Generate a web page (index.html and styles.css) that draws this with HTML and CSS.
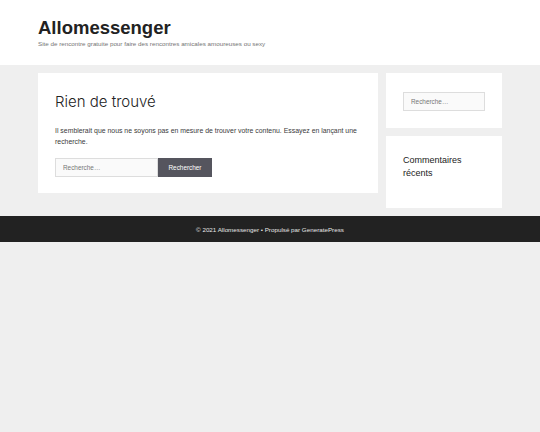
FILE: index.html
```html
<!DOCTYPE html>
<html lang="fr">
<head>
  <meta charset="UTF-8">
  <meta name="viewport" content="width=device-width, initial-scale=1.0">
  <title>Rien de trouvé – Allomessenger</title>
  <link rel="stylesheet" href="styles.css">
</head>
<body>
  <header class="site-header">
    <div class="inside-header">
      <p class="main-title">Allomessenger</p>
      <p class="site-description">Site de rencontre gratuite pour faire des rencontres amicales amoureuses ou sexy</p>
    </div>
  </header>

  <div class="site-content">
    <main class="content-area">
      <div class="inside-article">
        <h1 class="page-title">Rien de trouvé</h1>
        <p class="entry-text">Il semblerait que nous ne soyons pas en mesure de trouver votre contenu. Essayez en lançant une recherche.</p>
        <form class="search-form">
          <input type="search" class="search-field" placeholder="Recherche…">
          <button type="submit" class="search-submit">Rechercher</button>
        </form>
      </div>
    </main>

    <aside class="sidebar">
      <div class="widget widget-search">
        <input type="search" class="search-field" placeholder="Recherche…">
      </div>
      <div class="widget widget-comments">
        <h2 class="widget-title">Commentaires récents</h2>
      </div>
    </aside>
  </div>

  <footer class="site-info">
    <span>© 2021 Allomessenger • Propulsé par GeneratePress</span>
  </footer>
</body>
</html>
```

FILE: styles.css
```css
body {
  margin: 0;
  font-family: 'Liberation Sans', Arial, sans-serif;
  background-color: #efefef;
  color: #222;
}

p, h1, h2 {
  margin: 0;
}

.site-header {
  background-color: #ffffff;
}

.inside-header {
  width: 464px;
  margin: 0 auto;
  padding: 17px 0 16px;
}

.main-title {
  font-size: 18.5px;
  font-weight: 700;
  line-height: 22px;
  color: #222;
}

.site-description {
  font-size: 6.25px;
  line-height: 10px;
  color: #757575;
}

.site-content {
  width: 464px;
  margin: 0 auto;
  padding: 8px 0;
  display: flex;
  align-items: flex-start;
  gap: 8px;
}

.content-area {
  flex: 0 0 340px;
}

.inside-article {
  background-color: #ffffff;
  padding: 19px 17px 16px;
}

.page-title {
  font-family: 'Inter', sans-serif;
  font-size: 15px;
  font-weight: 300;
  line-height: 20px;
  color: #222;
  margin-bottom: 13px;
}

.entry-text {
  font-size: 6.9px;
  line-height: 11px;
  color: #3a3a3a;
  margin-bottom: 11px;
}

.search-form {
  display: flex;
}

.search-field {
  box-sizing: border-box;
  height: 19px;
  padding: 0 7px;
  font-family: inherit;
  font-size: 6.4px;
  color: #666;
  background-color: #fafafa;
  border: 1px solid #dddddd;
  border-radius: 0;
  outline: none;
}

.search-field::placeholder {
  color: #777;
}

.search-form .search-field {
  width: 103px;
}

.search-submit {
  box-sizing: border-box;
  width: 54px;
  height: 19px;
  padding: 0;
  font-family: inherit;
  font-size: 6.4px;
  color: #ffffff;
  background-color: #55555e;
  border: none;
  border-radius: 0;
}

.sidebar {
  flex: 0 0 116px;
  display: flex;
  flex-direction: column;
  gap: 8px;
}

.widget {
  background-color: #ffffff;
  padding: 17px;
}

.widget-search .search-field {
  width: 82px;
}

.widget-comments {
  padding-top: 18px;
  padding-bottom: 28px;
}

.widget-title {
  font-size: 9px;
  font-weight: 400;
  line-height: 13px;
  color: #222;
}

.site-info {
  height: 26px;
  display: flex;
  align-items: center;
  justify-content: center;
  background-color: #222222;
  color: #e6e6e6;
  font-size: 6.25px;
}
```
